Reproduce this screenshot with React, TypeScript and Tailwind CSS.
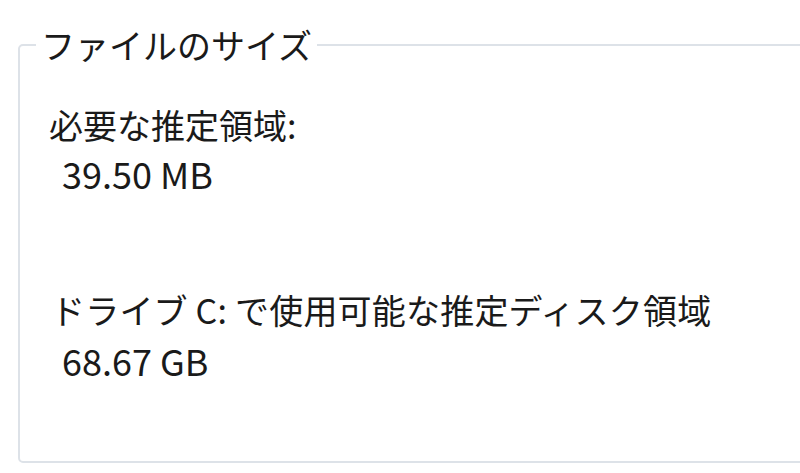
export default function App() {
  const font = { fontFamily: '"Noto Sans CJK JP", "Noto Sans", sans-serif' };
  return (
    <div className="w-[800px] h-[473px] overflow-hidden bg-white pt-[24px] pl-[18px]" style={font}>
      <fieldset className="w-[830px] h-[439px] border-2 border-[#dde2e8] rounded-[5px] text-[#1a1a1a]">
        <legend className="ml-[16px] px-[5px] text-[34px] leading-[42px]">ファイルのサイズ</legend>
        <div className="pl-[29px] pt-[35px] text-[34px] leading-[48px]">必要な推定領域:</div>
        <div className="pl-[42px] text-[36px] leading-[48px]">39.50 MB</div>
        <div className="pl-[31px] pt-[89px] text-[34px] leading-[48px] tracking-[0.2px]">ドライブ C: で使用可能な推定ディスク領域</div>
        <div className="pl-[42px] pt-[2px] text-[36px] leading-[48px]">68.67 GB</div>
      </fieldset>
    </div>
  );
}
